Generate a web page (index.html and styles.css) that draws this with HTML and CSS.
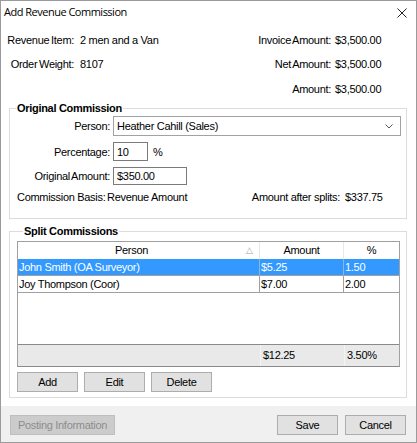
FILE: index.html
```html
<!DOCTYPE html>
<html>
<head>
<meta charset="utf-8">
<link rel="stylesheet" href="styles.css">
</head>
<body>
<div class="window">
  <div class="titlebar">
    <span class="title">Add Revenue Commission</span>
    <svg class="close" width="10" height="10" viewBox="0 0 10 10"><path d="M0.5 0.5 L9.5 9.5 M9.5 0.5 L0.5 9.5" stroke="#222" stroke-width="1" fill="none"/></svg>
  </div>
  <div class="content">
    <div class="info">
      <span class="lbl">Revenue Item:</span><span class="val">2 men and a Van</span><span class="lbl">Invoice Amount:</span><span class="val2">$3,500.00</span>
      <span class="lbl">Order Weight:</span><span class="val">8107</span><span class="lbl">Net Amount:</span><span class="val2">$3,500.00</span>
      <span></span><span></span><span class="lbl">Amount:</span><span class="val2">$3,500.00</span>
    </div>

    <fieldset class="group group-oc">
      <legend>Original Commission</legend>
      <div class="oc-grid">
        <span class="oc-lbl">Person:</span>
        <div class="combo"><span>Heather Cahill (Sales)</span><svg width="8" height="5" viewBox="0 0 8 5"><path d="M0.5 0.5 L4 4 L7.5 0.5" stroke="#555" stroke-width="1" fill="none"/></svg></div>
        <span class="oc-lbl">Percentage:</span>
        <div class="ctl-row"><div class="tbox tbox-pct">10</div><span class="pct">%</span></div>
        <span class="oc-lbl">Original Amount:</span>
        <div class="ctl-row"><div class="tbox tbox-amt">$350.00</div></div>
      </div>
      <div class="basis">
        <span class="basis-lbl">Commission Basis:</span><span>Revenue Amount</span>
        <span class="after-lbl">Amount after splits:</span><span class="after-val">$337.75</span>
      </div>
    </fieldset>

    <fieldset class="group group-split">
      <legend>Split Commissions</legend>
      <div class="grid">
        <div class="grow head">
          <div class="th th-person">Person<span class="sort">&#9651;</span></div>
          <div class="th">Amount</div>
          <div class="th th-last">%</div>
        </div>
        <div class="grow data sel">
          <div class="td">John Smith (OA Surveyor)</div>
          <div class="td">$5.25</div>
          <div class="td td-last">1.50</div>
        </div>
        <div class="grow data">
          <div class="td">Joy Thompson (Coor)</div>
          <div class="td">$7.00</div>
          <div class="td td-last">2.00</div>
        </div>
        <div class="grid-empty"></div>
        <div class="grow totals">
          <div class="tc"></div>
          <div class="tc">$12.25</div>
          <div class="tc tc-last">3.50%</div>
        </div>
      </div>
      <div class="btn-row">
        <button class="btn">Add</button>
        <button class="btn">Edit</button>
        <button class="btn">Delete</button>
      </div>
    </fieldset>
  </div>
  <div class="footer">
    <button class="btn btn-disabled">Posting Information</button>
    <div class="footer-right">
      <button class="btn">Save</button>
      <button class="btn">Cancel</button>
    </div>
  </div>
</div>
</body>
</html>
```

FILE: styles.css
```css
html, body {
  margin: 0;
  padding: 0;
  background: #fff;
}
body {
  font-family: "Liberation Sans", Arial, sans-serif;
  font-size: 11px;
  letter-spacing: -0.3px;
  color: #000;
}
.window {
  width: 417px;
  height: 443px;
  box-sizing: border-box;
  border: 1px solid #9b9b9b;
  display: flex;
  flex-direction: column;
  background: #fff;
}
.titlebar {
  height: 27px;
  box-sizing: border-box;
  padding: 3px 9px 0 3px;
  display: flex;
  justify-content: space-between;
  align-items: flex-start;
}
.title {
  font-family: "Open Sans", "Noto Sans", sans-serif;
  font-size: 11px;
  letter-spacing: -0.5px;
  line-height: 16px;
  color: #000;
}
.close {
  margin-top: 4px;
}
.content {
  flex: 1;
  display: flex;
  flex-direction: column;
}
.info {
  display: grid;
  grid-template-columns: 73px 1fr auto 85px;
  grid-template-rows: 24px 24px 26px;
  align-items: center;
  white-space: nowrap;
}
.lbl {
  text-align: right;
  word-spacing: -1px;
}
.val {
  padding-left: 6px;
}
.val2 {
  padding-left: 4px;
}
.group {
  margin: 0 9px 0 8px;
  padding: 0;
  border: 1px solid #dcdcdc;
  min-width: 0;
}
.group legend {
  font-weight: bold;
  line-height: 13px;
  padding: 0 1px;
  margin-left: 6px;
}
.group-oc {
  padding: 0 5px 10px 0;
}
.oc-grid {
  display: grid;
  grid-template-columns: 100px 1fr;
  grid-template-rows: 20px 19px 18px;
  column-gap: 3px;
  row-gap: 6px;
  margin-top: 1px;
  align-items: center;
  white-space: nowrap;
}
.oc-lbl {
  text-align: right;
  word-spacing: -1px;
}
.combo {
  height: 20px;
  box-sizing: border-box;
  border: 1px solid #a2a2a2;
  display: flex;
  align-items: center;
  justify-content: space-between;
  padding: 0 7px 0 3px;
}
.ctl-row {
  display: flex;
  align-items: center;
  height: 100%;
}
.tbox {
  height: 100%;
  box-sizing: border-box;
  border: 1px solid #7a7a7a;
  padding-left: 3px;
  display: flex;
  align-items: center;
}
.tbox-pct {
  width: 35px;
}
.tbox-amt {
  width: 74px;
}
.pct {
  margin-left: 5px;
}
.basis {
  display: flex;
  align-items: center;
  height: 22px;
  margin-top: 1px;
  padding-left: 7px;
  white-space: nowrap;
}
.basis-lbl {
  width: 90px;
}
.after-lbl {
  margin-left: auto;
  margin-right: 5px;
}
.after-val {
  width: 56px;
}
.group-split {
  margin-top: 6px;
  padding: 0 0 5px 7px;
}
.grid {
  margin-top: 3px;
  width: 383px;
  height: 126px;
  box-sizing: border-box;
  border: 1px solid #a0a0a0;
  border-bottom-color: #8a8a8a;
  display: flex;
  flex-direction: column;
  white-space: nowrap;
}
.grow {
  display: grid;
  grid-template-columns: 242px 84px 1fr;
}
.head {
  height: 17px;
}
.th {
  text-align: center;
  line-height: 17px;
  border-right: 1px solid #e8e8e8;
  position: relative;
}
.th-person {
  padding-right: 14px;
}
.th-last {
  border-right: none;
}
.sort {
  position: absolute;
  right: 6px;
  top: 0;
  color: #a5a5a5;
  font-size: 9px;
}
.data {
  height: 17px;
  box-sizing: border-box;
  border-bottom: 1px solid #a0a0a0;
}
.td {
  line-height: 16px;
  padding-left: 1px;
  border-right: 1px solid #a0a0a0;
}
.td-last {
  border-right: none;
}
.sel {
  background: #3399ff;
  color: #fff;
}
.sel .td {
  border-right-color: #8ab5e0;
}
.grid-empty {
  flex: 1;
}
.totals {
  height: 22px;
  box-sizing: border-box;
  border-top: 1px solid #8a8a8a;
  background: #e9e9e9;
}
.tc {
  line-height: 21px;
  padding-left: 2px;
  border-left: 1px solid #f4f4f4;
}
.tc:first-child {
  border-left: none;
}
.btn-row {
  display: flex;
  gap: 6px;
  margin-top: 5px;
}
.btn {
  font-family: "Liberation Sans", Arial, sans-serif;
  font-size: 11px;
  letter-spacing: -0.3px;
  color: #000;
  width: 61px;
  height: 20px;
  box-sizing: border-box;
  border: 1px solid #adadad;
  background: #e1e1e1;
  padding: 0;
  margin: 0;
}
.footer {
  height: 36px;
  box-sizing: border-box;
  background: #f0f0f0;
  padding: 9px 10px 0 9px;
  display: flex;
  justify-content: space-between;
  align-items: flex-start;
}
.btn-disabled {
  width: 105px;
  background: #cccccc;
  border-color: #bfbfbf;
  color: #8d8d8d;
}
.footer-right {
  display: flex;
  gap: 7px;
}
```
